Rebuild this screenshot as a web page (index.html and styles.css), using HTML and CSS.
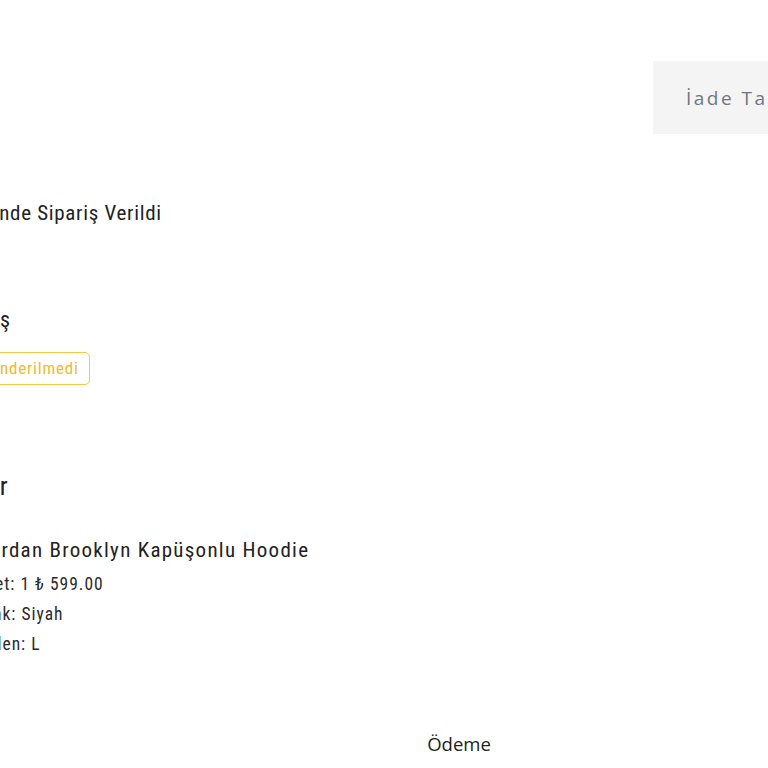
FILE: index.html
```html
<!DOCTYPE html>
<html lang="tr">
<head>
<meta charset="utf-8">
<title>Sipariş Detayı</title>
<link rel="stylesheet" href="styles.css">
</head>
<body>
<main class="page">
  <section class="order-top">
    <div class="order-info">
      <p class="order-date">29 Mayıs 2023 tarihinde Sipariş Verildi</p>
      <div class="status-block">
        <p class="pay-status">Ödenmiş</p>
        <span class="badge">Gönderilmedi</span>
      </div>
      <h2 class="section-title">Ürünler</h2>
      <div class="product">
        <p class="product-name">Air Jordan Brooklyn Kapüşonlu Hoodie</p>
        <p class="product-meta meta-qty">Adet: 1 ₺ 599.00</p>
        <p class="product-meta meta-color">Renk: Siyah</p>
        <p class="product-meta meta-size">Beden: L</p>
      </div>
    </div>
    <div class="actions">
      <button class="return-btn" type="button">İade Talebi Oluştur</button>
    </div>
  </section>
  <nav class="tabs">
    <span class="tab">Ödeme</span>
  </nav>
</main>
</body>
</html>
```
FILE: styles.css
```css
html, body {
  margin: 0;
  padding: 0;
  background: #ffffff;
  overflow: hidden;
}
body {
  font-family: "Roboto Condensed", "Roboto", sans-serif;
  color: #222;
}
p, h2 { margin: 0; }

.page {
  width: 1100px;
}
.order-top {
  display: grid;
  grid-template-columns: 653px auto;
  align-items: start;
}
.order-info {
  padding-top: 198px;
  display: flex;
  flex-direction: column;
}
.order-date {
  font-size: 21px;
  letter-spacing: 0.7px;
  line-height: 30px;
  margin-left: -183px;
  white-space: nowrap;
}
.status-block {
  margin-top: 77px;
  display: flex;
  flex-direction: column;
  align-items: flex-start;
  gap: 17px;
}
.pay-status {
  font-size: 22px;
  letter-spacing: 1px;
  line-height: 30px;
  margin-left: -72.7px;
  white-space: nowrap;
}
.badge {
  margin-left: -31.2px;
  border: 1px solid #f6c844;
  border-radius: 5px;
  color: #f2b928;
  font-size: 17px;
  letter-spacing: 0.8px;
  line-height: 31px;
  padding: 0 10px;
  white-space: nowrap;
}
.section-title {
  margin-top: 84px;
  font-size: 26px;
  font-weight: 400;
  letter-spacing: 1px;
  line-height: 34px;
  margin-left: -72px;
  white-space: nowrap;
}
.product {
  margin-top: 32px;
  display: flex;
  flex-direction: column;
}
.product-name {
  font-size: 21px;
  letter-spacing: 1.27px;
  line-height: 30px;
  margin-left: -55px;
  margin-bottom: 4px;
  white-space: nowrap;
}
.product-meta {
  font-size: 17.5px;
  letter-spacing: 1px;
  line-height: 30px;
  color: #2b2b2b;
  white-space: nowrap;
}
.meta-qty { margin-left: -25.8px; }
.meta-color { margin-left: -26.5px; }
.meta-size { margin-left: -27px; }

.actions {
  padding-top: 61px;
}
.return-btn {
  background: #f4f4f4;
  border: 0;
  height: 73px;
  padding: 0 33px;
  font-family: "Open Sans", sans-serif;
  font-size: 19px;
  letter-spacing: 2.5px;
  color: #6f7681;
  white-space: nowrap;
  cursor: pointer;
}

.tabs {
  margin-top: 72px;
  display: grid;
  grid-template-columns: 368px 182px;
}
.tab {
  grid-column: 2;
  text-align: center;
  font-family: "Open Sans", sans-serif;
  font-size: 18.5px;
  line-height: 26px;
  color: #222;
}
```
